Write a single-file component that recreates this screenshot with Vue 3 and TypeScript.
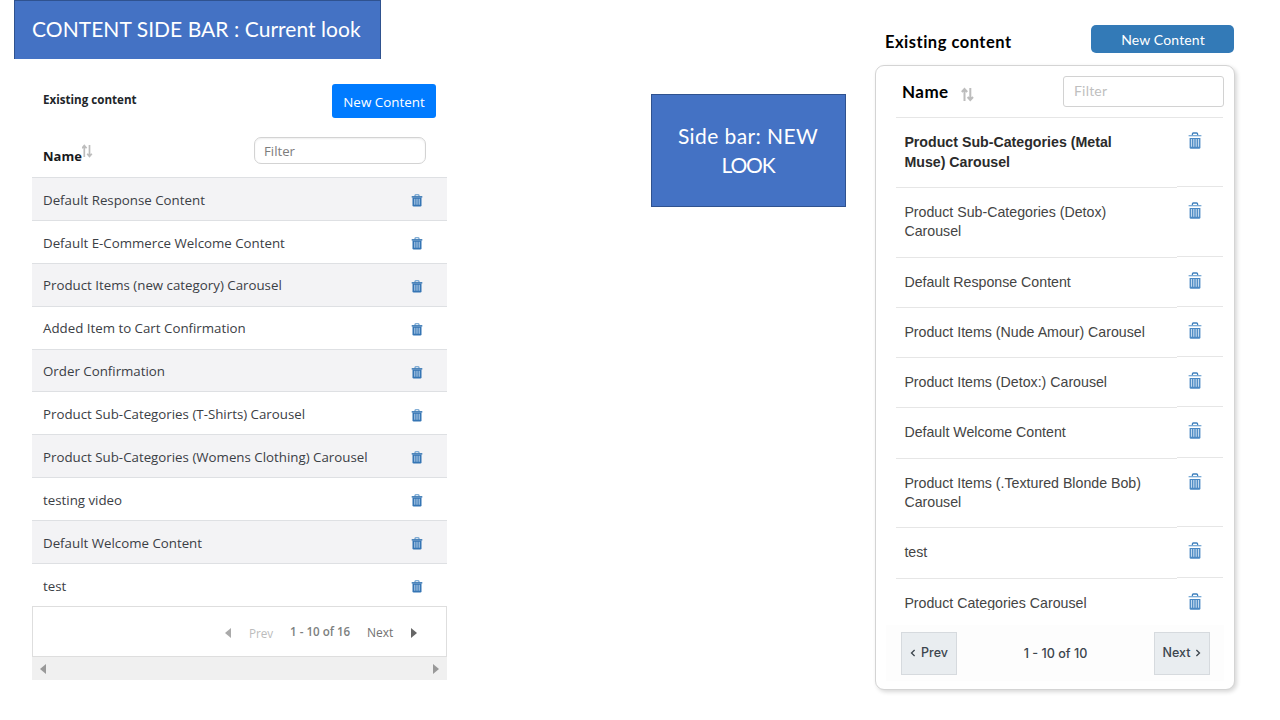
<script setup lang="ts">
interface Item {
  name: string
  tall?: boolean
  active?: boolean
}

const currentItems: string[] = [
  'Default Response Content',
  'Default E-Commerce Welcome Content',
  'Product Items (new category) Carousel',
  'Added Item to Cart Confirmation',
  'Order Confirmation',
  'Product Sub-Categories (T-Shirts) Carousel',
  'Product Sub-Categories (Womens Clothing) Carousel',
  'testing video',
  'Default Welcome Content',
  'test',
]

const newItems: Item[] = [
  { name: 'Product Sub-Categories (Metal Muse) Carousel', tall: true, active: true },
  { name: 'Product Sub-Categories (Detox) Carousel', tall: true },
  { name: 'Default Response Content' },
  { name: 'Product Items (Nude Amour) Carousel' },
  { name: 'Product Items (Detox:) Carousel' },
  { name: 'Default Welcome Content' },
  { name: 'Product Items (.Textured Blonde Bob) Carousel', tall: true },
  { name: 'test' },
  { name: 'Product Categories Carousel' },
]
</script>

<template>
  <main class="slide">
    <section class="current">
      <h1 class="banner">CONTENT SIDE BAR : Current look</h1>
      <div class="old-panel">
        <div class="old-head">
          <h2>Existing content</h2>
          <button class="old-new">New Content</button>
        </div>
        <div class="old-tools">
          <span class="old-name">Name</span>
          <svg class="old-sort" width="12" height="14" viewBox="0 0 12 14" fill="none" stroke="#bdbdbd" stroke-width="1.7">
            <path d="M2.3 13V2M.1 4.3L2.3 1.6L4.6 4.3M7.5 1V12M5.2 9.7L7.5 12.4L9.8 9.7" />
          </svg>
          <div class="old-filter">Filter</div>
        </div>
        <ul class="old-list">
          <li v-for="item in currentItems" :key="item">
            <span>{{ item }}</span>
            <svg width="12" height="13" viewBox="0 0 12 13">
              <path d="M4 2.4V1.6Q4 .8 4.8 .8H7.2Q8 .8 8 1.6V2.4" fill="none" stroke="#5c95c9" stroke-width="1.1" />
              <rect x=".7" y="2.1" width="10.6" height="1.5" fill="#3c7ab5" />
              <path d="M1.5 3.5H10.5V11.2Q10.5 12.4 9.3 12.4H2.7Q1.5 12.4 1.5 11.2Z" fill="#3575b4" />
              <path d="M3.8 4.8V10.7M6 4.8V10.7M8.2 4.8V10.7" stroke="#b5d0ea" stroke-width="1.05" />
            </svg>
          </li>
        </ul>
        <div class="old-pager">
          <svg width="6" height="10" viewBox="0 0 6 10"><path d="M6 0V10L0 5Z" fill="#aaa" /></svg>
          <span class="old-prev">Prev</span>
          <span class="old-range">1 - 10 of 16</span>
          <span class="old-next">Next</span>
          <svg width="6" height="10" viewBox="0 0 6 10"><path d="M0 0V10L6 5Z" fill="#666" /></svg>
        </div>
        <div class="old-scroll">
          <svg width="6" height="10" viewBox="0 0 6 10"><path d="M6 0V10L0 5Z" fill="#999" /></svg>
          <svg width="6" height="10" viewBox="0 0 6 10"><path d="M0 0V10L6 5Z" fill="#999" /></svg>
        </div>
      </div>
    </section>

    <aside class="note"><span>Side bar: NEW</span><span class="note-end">LOOK</span></aside>

    <section class="proposed">
      <div class="new-head">
        <h2>Existing content</h2>
        <button class="new-new">New Content</button>
      </div>
      <div class="card">
        <div class="new-tools">
          <span class="new-name">Name</span>
          <svg width="13" height="15" viewBox="0 0 13 15" fill="none" stroke="#bdbdbd" stroke-width="2">
            <path d="M3.5 14V2.5M.8 5L3.5 2L6.2 5M9.3 1V12.5M6.6 10L9.3 13L12 10" />
          </svg>
          <div class="new-filter">Filter</div>
        </div>
        <ul class="new-list">
          <li v-for="item in newItems" :key="item.name" :class="{ tall: item.tall, active: item.active }">
            <span class="cell-name">{{ item.name }}</span>
            <span class="cell-action">
              <svg width="14" height="18" viewBox="0 0 14 18">
                <path d="M4.4 3.3V2Q4.4 1 5.4 1H8.6Q9.6 1 9.6 2V3.3" fill="none" stroke="#3f80bd" stroke-width="1.3" />
                <rect x=".6" y="3.1" width="12.8" height="1.2" fill="#6ea3d3" />
                <path d="M1.6 5.9H12.4V15.4Q12.4 16.7 11.1 16.7H2.9Q1.6 16.7 1.6 15.4Z" fill="#4a88c3" />
                <path d="M3.5 6.9V14.8M5.8 6.9V14.8M8.2 6.9V14.8M10.5 6.9V14.8" stroke="#c3daef" stroke-width="1.15" />
              </svg>
            </span>
          </li>
        </ul>
        <div class="new-pager">
          <button class="page-btn">
            <svg width="6" height="8" viewBox="0 0 6 8" fill="none" stroke="#3c454d" stroke-width="1.3"><path d="M4.6 1L1.5 4L4.6 7" /></svg>
            <span>Prev</span>
          </button>
          <span class="new-range">1 - 10 of 10</span>
          <button class="page-btn">
            <span>Next</span>
            <svg width="6" height="8" viewBox="0 0 6 8" fill="none" stroke="#3c454d" stroke-width="1.3"><path d="M1.4 1L4.5 4L1.4 7" /></svg>
          </button>
        </div>
      </div>
    </section>
  </main>
</template>

<style>
body { background: #fff; }
</style>

<style scoped>
* { box-sizing: border-box; }
h1, h2, ul { margin: 0; padding: 0; }
ul { list-style: none; }
svg { display: block; flex: none; }
button { border: 0; padding: 0; display: flex; align-items: center; justify-content: center; }
.slide {
  width: 1280px; height: 720px; overflow: hidden; background: #fff;
  display: flex; align-items: flex-start; padding-left: 14px;
  font-family: "Open Sans", "Noto Sans", sans-serif;
}
.current { width: 433px; }
.banner {
  width: 367px; height: 59px; padding-left: 17px; background: #4472c4; border: 1px solid #2f528f; border-bottom: 0;
  color: #fff; font: 400 21px/56px Lato, sans-serif; letter-spacing: .05px; white-space: nowrap;
}
.old-panel { width: 415px; margin: 25px 0 0 18px; }
.old-head { display: flex; justify-content: space-between; height: 53px; padding: 0 11px 0 11px; }
.old-head h2 { font-size: 11.6px; line-height: 32px; font-weight: 700; color: #212529; }
.old-new {
  width: 104px; height: 34px; border-radius: 3px; background: #007bff; color: #fff;
  font: 400 13.4px/34px "Open Sans", sans-serif; padding-top: 1px;
}
.old-tools { display: flex; height: 40px; padding: 0 21px 0 11px; }
.old-name { font-size: 13px; line-height: 39px; font-weight: 700; color: #17191c; }
.old-sort { margin-top: 7px; }
.old-filter {
  width: 172px; height: 27px; margin-left: auto; padding-left: 9px; border: 1px solid #d3d3d3; border-radius: 7px;
  font-size: 13.2px; line-height: 27px; color: #7d7d7d; box-shadow: inset 0 1px 2px #eee;
}
.old-list li {
  height: 42.9px; display: flex; align-items: center; justify-content: space-between;
  padding: 1.4px 24px 0 11px; border-top: 1px solid #dee0e3; font-size: 13.3px; color: #3b4045; white-space: nowrap;
}
.old-list svg { margin-top: 2px; }
.old-list li:nth-child(odd) { background: #f3f3f5; }
.old-pager {
  height: 51.5px; border: 1px solid #dedede; display: flex; align-items: center; padding: 2px 0 0 192px;
  font-size: 12px; color: #717171; white-space: nowrap;
}
.old-prev { margin-left: 18px; width: 41px; font-size: 11.7px; color: #bcbcbc; }
.old-range { width: 77px; font-size: 11.6px; font-weight: 600; color: #7d7f80; margin-top: -3px; }
.old-next { width: 44px; font-weight: 500; }
.old-scroll { height: 22.5px; background: #f0f0f0; display: flex; align-items: center; justify-content: space-between; padding: 1px 8px 0; }

.note {
  width: 195px; height: 113px; margin: 94px 0 0 204px; background: #4472c4; border: 1px solid #2f528f;
  display: flex; flex-direction: column; align-items: center; justify-content: center; padding: 0 1px 2px 0;
  color: #fff; font: 21px/29px Lato, sans-serif; letter-spacing: .4px;
}
.note-end { letter-spacing: -1.2px; }

.proposed { width: 360px; margin: 25px 0 0 29px; }
.new-head { display: flex; justify-content: space-between; padding: 0 1px 0 10px; height: 40px; }
.new-head h2 { font: 700 16.5px/34px Lato, sans-serif; letter-spacing: .5px; color: #000; }
.new-new {
  width: 143px; height: 28px; border-radius: 5px; background: #337ab7; color: #fff;
  font: 400 14px/28px Lato, sans-serif; letter-spacing: .15px; padding: 2px 0 0 1px;
}
.card {
  height: 625px; border: 1px solid #d4d4d4; border-radius: 9px; background: #fff;
  box-shadow: 2px 2px 4px rgba(0, 0, 0, .16); padding: 10px 10px 0 20px;
}
.new-tools { display: flex; height: 41px; padding-left: 6px; }
.new-name { font: 700 17px/32px Lato, sans-serif; letter-spacing: .45px; color: #000; margin-right: 12px; }
.new-tools svg { margin-top: 11px; }
.new-filter {
  width: 161px; height: 31px; margin-left: auto; padding-left: 10px; border: 1px solid #d2d2d2; border-radius: 3px;
  font: 14px/28px Lato, sans-serif; letter-spacing: .2px; color: #bfbfbf;
}
.new-list { height: 493px; overflow: hidden; }
.new-list li {
  height: 50.25px; display: flex;
  font: 14.2px/19.5px "Liberation Sans", Arial, sans-serif; color: #444;
}
.new-list li.tall { height: 69.8px; }
.new-list li.active { font-weight: 700; color: #2b2b2b; }
.cell-name { width: 281px; padding: 15px 28px 0 8.4px; border-top: 1px solid #e6e6e6; }
.cell-action { flex: none; width: 46px; padding: 14.4px 0 0 11.4px; border-top: 1px solid #e6e6e6; }
.new-list li + li .cell-action { margin-top: -1px; padding-top: 15.9px; }
.new-list svg { margin-top: -.9px; }
.new-pager {
  display: flex; align-items: center; justify-content: space-between; height: 56px; margin: 15px 0 0 -10px;
  padding: 0 14px 0 15px; background: #fdfdfd; font-family: Inter, sans-serif;
}
.page-btn {
  width: 56px; height: 43px; gap: 5px; border: 1px solid #d6dade; background: #e9edf0;
  font: 500 12.5px/16px Inter, sans-serif; color: #3c454d;
}
.new-range { font-size: 12.6px; font-weight: 500; color: #3c454d; }
</style>
